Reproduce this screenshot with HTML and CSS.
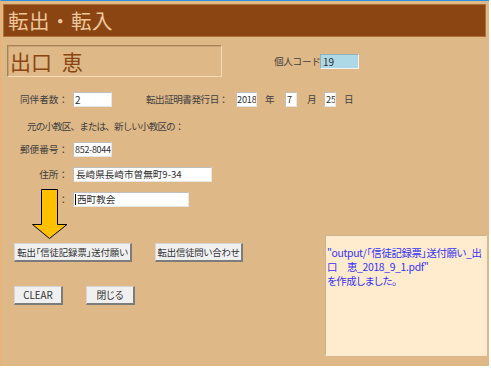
FILE: index.html
```html
<!DOCTYPE html>
<html lang="ja">
<head>
<meta charset="utf-8">
<title>転出・転入</title>
<link rel="stylesheet" href="styles.css">
</head>
<body>
<div class="form">
  <header class="titlebar"><h1 class="title">転出・転入</h1></header>

  <div class="top">
    <div class="namebox">出口 恵</div>
    <div class="code">
      <span class="lbl code-lbl">個人コード</span>
      <span class="inp code-inp">19</span>
    </div>
  </div>

  <div class="fields">
    <div class="row r1">
      <span class="lab">同伴者数：</span>
      <span class="inp w-count">2</span>
      <span class="lbl date-lbl">転出証明書発行日：</span>
      <span class="inp w-year">2018</span>
      <span class="unit u-year">年</span>
      <span class="inp w-small">7</span>
      <span class="unit u-month">月</span>
      <span class="inp w-small">25</span>
      <span class="unit u-day">日</span>
    </div>
    <div class="row note">元の小教区、または、新しい小教区の：</div>
    <div class="row r-zip">
      <span class="lab">郵便番号：</span>
      <span class="inp w-zip">852-8044</span>
    </div>
    <div class="row r-addr">
      <span class="lab">住所：</span>
      <span class="inp w-addr">長崎県長崎市曽無町9-34</span>
    </div>
    <div class="row r-church">
      <span class="lab">：</span>
      <span class="inp w-church"><span class="caret"></span>西町教会</span>
    </div>
  </div>

  <div class="bottom">
    <div class="buttons">
      <div class="btnrow">
        <button class="btn b-send">転出「信徒記録票」送付願い</button>
        <button class="btn b-ask">転出信徒問い合わせ</button>
      </div>
      <div class="btnrow second">
        <button class="btn b-small">CLEAR</button>
        <button class="btn b-small">閉じる</button>
      </div>
    </div>
    <div class="msg">
      <p class="msg-line">"output/「信徒記録票」送付願い_出</p>
      <p class="msg-line">口　恵_2018_9_1.pdf"</p>
      <p class="msg-line">を作成しました。</p>
    </div>
  </div>

  <svg class="arrow" width="36" height="52" viewBox="0 0 36 52">
    <polygon points="9.5,1.5 25.5,1.5 25.5,36.5 35,36.5 17.5,50.5 0.5,36.5 9.5,36.5" fill="#FFC000" stroke="#000" stroke-width="1"/>
  </svg>
</div>
</body>
</html>
```

FILE: styles.css
```css
* { box-sizing: border-box; }

html, body {
  margin: 0;
  padding: 0;
  background: #ffffff;
}

body {
  font-family: "Noto Sans CJK JP", sans-serif;
  color: #404040;
}

.form {
  position: relative;
  width: 489px;
  height: 366px;
  background: #DEB887;
  border-top: 1px solid #2b8ee0;
  border-left: 1px solid #efb070;
  padding: 3px 0 0 2px;
}

.titlebar {
  width: 483px;
  height: 33px;
  background: #8B4513;
  border: 1px solid #b0703a;
  display: flex;
  align-items: center;
  padding-left: 4px;
}

.title {
  margin: 0;
  font-size: 20.5px;
  font-weight: normal;
  color: #EDC79C;
  line-height: 1;
  letter-spacing: 0.5px;
}

.top {
  display: flex;
  align-items: center;
  margin-top: 8px;
  padding-left: 4px;
}

.namebox {
  width: 215px;
  height: 32px;
  border: 1px solid #a48256;
  border-right-color: #f6dcb6;
  border-bottom-color: #f6dcb6;
  box-shadow: inset 1px 1px 0 #c9a274;
  color: #8B4513;
  font-size: 21px;
  line-height: 30px;
  padding-left: 2px;
  word-spacing: 5px;
}

.code {
  display: flex;
  align-items: center;
  margin-left: 52px;
}

.lbl, .lab, .unit, .note {
  font-size: 9.6px;
  line-height: 15px;
  white-space: nowrap;
}

.code-lbl {
  width: 46px;
  letter-spacing: -0.3px;
}

.inp {
  display: block;
  height: 15px;
  background: #ffffff;
  border: 1px solid #bfbfbf;
  border-right-color: #e6e6e6;
  border-bottom-color: #e6e6e6;
  font-family: "Noto Sans CJK JP", sans-serif;
  font-size: 10px;
  line-height: 13px;
  padding-left: 1px;
  color: #303030;
  white-space: nowrap;
  overflow: hidden;
}

.code-inp {
  width: 39px;
  background: #ADD8E6;
  border: 1px solid #f4f4f4;
  border-top-color: #8fb0bc;
  border-left-color: #8fb0bc;
  padding-left: 2px;
}

.fields {
  display: flex;
  flex-direction: column;
}

.row {
  display: flex;
  align-items: center;
  height: 15px;
}

.r1 { margin-top: 15px; }
.note { margin-top: 12px; padding-left: 24px; letter-spacing: -0.9px; }
.r-zip { margin-top: 8px; }
.r-addr { margin-top: 10px; }
.r-church { margin-top: 10px; }

.lab {
  width: 65px;
  text-align: right;
  margin-right: 5px;
}

.w-count { width: 39px; }
.w-zip { width: 39px; font-size: 9px; padding-left: 1px; letter-spacing: -0.3px; }
.w-addr { width: 139px; font-size: 9.6px; padding-left: 2px; }
.w-church { width: 116px; font-size: 9.6px; padding-left: 1px; display: flex; align-items: center; }

.caret {
  display: inline-block;
  width: 1px;
  height: 11px;
  background: #000;
  margin-right: 1px;
}

.date-lbl {
  width: 90px;
  margin-left: 34px;
  letter-spacing: -0.5px;
}

.w-year { width: 21px; font-size: 9.2px; padding-left: 0; letter-spacing: -0.2px; }
.w-small { width: 12px; font-size: 9.2px; padding-left: 1px; letter-spacing: -0.2px; }

.unit { display: block; width: 10px; }
.u-year { margin: 0 10px 0 8px; }
.u-month { margin: 0 7px 0 10px; }
.u-day { margin-left: 8px; }

.bottom {
  display: flex;
  margin-top: 28px;
}

.buttons {
  width: 322px;
  padding-top: 8px;
  padding-left: 11px;
}

.btnrow {
  display: flex;
  gap: 23px;
}

.btnrow.second {
  margin-top: 24px;
}

.btn {
  height: 19px;
  padding: 0;
  margin: 0;
  background: #F0F0F0;
  border: 1px solid #d6d6d6;
  border-right: 2px solid #7c7c7c;
  border-bottom: 2px solid #7c7c7c;
  font-family: "Noto Sans CJK JP", sans-serif;
  font-size: 9.4px;
  color: #303030;
  line-height: 15px;
  white-space: nowrap;
  font-feature-settings: "palt";
}

.b-send { width: 118px; letter-spacing: -0.1px; }
.b-ask { width: 88px; letter-spacing: -0.2px; }
.b-small { width: 49px; font-size: 9.8px; }

.msg {
  width: 162px;
  height: 121px;
  background: #FFEBCD;
  border: 1px solid #cdb48c;
  border-right-color: #f7ead4;
  border-bottom-color: #f7ead4;
  color: #3434f4;
  font-size: 10.4px;
  padding: 10px 0 0 1px;
  white-space: nowrap;
  letter-spacing: -0.35px;
  font-feature-settings: "palt";
}

.msg-line {
  margin: 0;
  height: 14px;
  line-height: 14px;
}

.arrow {
  position: absolute;
  left: 31px;
  top: 187px;
}
```
